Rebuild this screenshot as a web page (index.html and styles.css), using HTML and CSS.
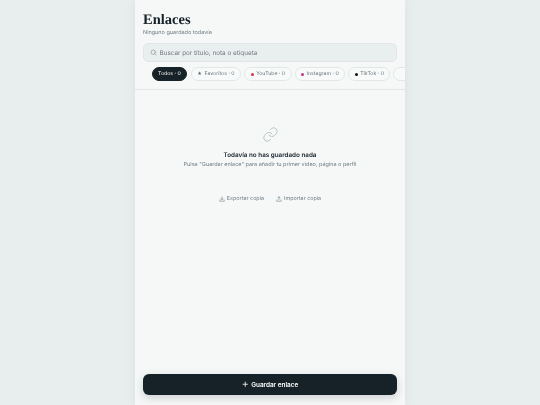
FILE: index.html
```html
<!DOCTYPE html>
<html lang="es">
<head>
<meta charset="utf-8">
<title>Enlaces</title>
<link rel="stylesheet" href="styles.css">
</head>
<body>
<main class="panel">
  <header class="head">
    <div class="layer">
    <h1 class="title">Enlaces</h1>
    <p class="subtitle">Ninguno guardado todavía</p>
    <div class="search">
      <svg class="search-icon" viewBox="0 0 24 24" width="7" height="7" fill="none" stroke="#7c8a8f" stroke-width="2" stroke-linecap="round"><circle cx="11" cy="11" r="7.5"/><path d="M21 21l-4.5-4.5"/></svg>
      <span class="search-text">Buscar por título, nota o etiqueta</span>
    </div>
    <div class="chips">
      <span class="chip active">Todos · 0</span>
      <span class="chip"><i class="star">★</i>Favoritos · 0</span>
      <span class="chip"><i class="dot red"></i>YouTube · 0</span>
      <span class="chip"><i class="dot pink"></i>Instagram · 0</span>
      <span class="chip"><i class="dot black"></i>TikTok · 0</span>
      <span class="chip stub"></span>
    </div>
    </div>
  </header>
  <section class="empty layer">
    <svg class="link-icon" viewBox="0 0 24 24" width="17" height="17" fill="none" stroke="#b4c0c3" stroke-width="1.3" stroke-linecap="round" stroke-linejoin="round"><path d="M10 13a5 5 0 0 0 7.5.5l3-3a5 5 0 0 0-7-7l-1.7 1.7"/><path d="M14 11a5 5 0 0 0-7.5-.5l-3 3a5 5 0 0 0 7 7l1.7-1.7"/></svg>
    <h2 class="empty-title">Todavía no has guardado nada</h2>
    <p class="empty-text">Pulsa "Guardar enlace" para añadir tu primer vídeo, página o perfil</p>
    <div class="actions">
      <span class="action"><svg viewBox="0 0 24 24" width="6" height="6" fill="none" stroke="#5f6e74" stroke-width="2" stroke-linecap="round" stroke-linejoin="round"><path d="M12 3v12M7 10l5 5 5-5M3 16v5h18v-5"/></svg>Exportar copia</span>
      <span class="action"><svg viewBox="0 0 24 24" width="6" height="6" fill="none" stroke="#5f6e74" stroke-width="2" stroke-linecap="round" stroke-linejoin="round"><path d="M12 15V3M7 8l5-5 5 5M3 16v5h18v-5"/></svg>Importar copia</span>
    </div>
  </section>
  <div class="footer layer">
    <button class="save" type="button"><svg viewBox="0 0 24 24" width="6.5" height="6.5" fill="none" stroke="#fff" stroke-width="3" stroke-linecap="round"><path d="M12 4v16M4 12h16"/></svg>Guardar enlace</button>
  </div>
</main>
</body>
</html>
```
FILE: styles.css
```css
* { box-sizing: border-box; }
html, body { margin: 0; height: 100%; }
body {
  background: #e8eeee;
  font-family: Inter, "Liberation Sans", sans-serif;
  color: #172228;
  display: flex;
  justify-content: center;
  overflow: hidden;
  text-rendering: geometricPrecision;
}
.layer { will-change: transform; }
.panel {
  width: 270px;
  height: 405px;
  background: #f6f8f8;
  box-shadow: 0 0 12px rgba(23, 34, 40, 0.06);
  display: flex;
  flex-direction: column;
}
.head {
  padding: 12px 8px 8px;
  border-bottom: 1px solid #e1e6e7;
  overflow: hidden;
}
.title {
  margin: 0;
  font: 700 14.5px/17px "Liberation Serif", serif;
  color: #172228;
}
.subtitle {
  margin: 0;
  font-size: 5.5px;
  line-height: 8px;
  color: #6f7d83;
}
.search {
  margin-top: 6px;
  height: 19px;
  border: 1px solid #e0e6e7;
  border-radius: 5px;
  background: #e9eeee;
  display: flex;
  align-items: center;
  padding: 0 5.5px;
  gap: 3px;
}
.search-text { font-size: 6.35px; color: #6f7d83; }
.chips {
  margin-top: 5px;
  padding-left: 9px;
  display: flex;
  gap: 3px;
  white-space: nowrap;
}
.chip {
  flex: none;
  height: 14px;
  padding: 0 5.5px;
  border: 1px solid #e1e6e7;
  border-radius: 7px;
  background: #f8fafa;
  font-size: 5.2px;
  color: #66747a;
  display: inline-flex;
  align-items: center;
  gap: 2.5px;
}
.chip.active { background: #172228; border-color: #172228; color: #fff; padding: 0 5px; margin-right: 1px; }
.stub { width: 30px; }
.star { font-style: normal; font-size: 4.5px; color: #56656c; }
.dot { width: 3px; height: 3px; border-radius: 50%; }
.red { background: #d8344a; }
.pink { background: #c13584; }
.black { background: #111; }
.empty {
  flex: 1;
  display: flex;
  flex-direction: column;
  align-items: center;
  padding-top: 36px;
}
.empty-title {
  margin: 7px 0 0;
  font-size: 6.3px;
  line-height: 10px;
  font-weight: 600;
  color: #172228;
}
.empty-text {
  margin: 1px 0 0;
  font-size: 5.5px;
  line-height: 9px;
  color: #6f7d83;
}
.actions {
  margin-top: 25px;
  display: flex;
  gap: 12px;
}
.action {
  font-size: 5.4px;
  line-height: 8px;
  color: #6f7d83;
  display: inline-flex;
  align-items: center;
  gap: 2px;
}
.footer { padding: 0 8px 10px; }
.save {
  width: 100%;
  height: 21px;
  border: 0;
  border-radius: 6px;
  background: #172228;
  color: #fff;
  font: 600 6.4px Inter, "Liberation Sans", sans-serif;
  display: flex;
  align-items: center;
  justify-content: center;
  gap: 3px;
  box-shadow: 0 3px 8px rgba(23, 34, 40, 0.18);
}
```
